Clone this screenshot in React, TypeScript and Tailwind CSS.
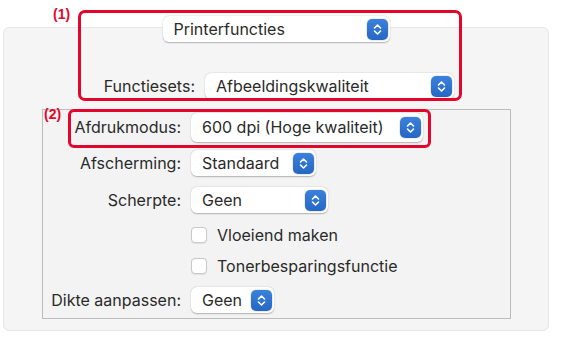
import React from 'react'

const Stepper = () => (
  <div className="flex h-[21px] w-[21px] items-center justify-center rounded-[5px] bg-gradient-to-b from-[#3b82dc] to-[#2567c4] shadow-[0_0_0_0.5px_rgba(0,0,0,0.15)]">
    <svg width="9" height="13" viewBox="0 0 9 13" fill="none">
      <path d="M1.5 5 L4.5 2 L7.5 5" stroke="white" strokeWidth="1.6" strokeLinecap="round" strokeLinejoin="round" />
      <path d="M1.5 8 L4.5 11 L7.5 8" stroke="white" strokeWidth="1.6" strokeLinecap="round" strokeLinejoin="round" />
    </svg>
  </div>
)

const Popup = ({ text, width, tall }: { text: string; width: string; tall?: boolean }) => (
  <div
    className={`flex ${tall ? 'h-[29px]' : 'h-[26px]'} ${width} items-center justify-between rounded-[6px] bg-white pl-[11px] pr-[2px] shadow-[0_0.5px_1.5px_rgba(0,0,0,0.28)]`}
  >
    <span className="whitespace-nowrap">{text}</span>
    <Stepper />
  </div>
)

const Row = ({ label, children, h }: { label: string; children: React.ReactNode; h: string }) => (
  <div className={`flex ${h} items-center`}>
    <div className="w-[148px] whitespace-nowrap pr-[10px] text-right">{label}</div>
    {children}
  </div>
)

const Check = ({ label }: { label: string }) => (
  <div className="flex h-[20px] items-center pl-[148px]">
    <div className="h-[16px] w-[16px] rounded-[4px] border border-[#c9c9c9] bg-white shadow-[0_0.5px_1px_rgba(0,0,0,0.08)]" />
    <span className="ml-[10px] whitespace-nowrap">{label}</span>
  </div>
)

export default function App() {
  return (
    <div
      className="relative h-[340px] w-[563px] overflow-hidden bg-white text-[16px] leading-none text-[#2a2a2a]"
      style={{ fontFamily: 'Inter, "Liberation Sans", sans-serif' }}
    >
      <div className="ml-[3px] mt-[27px] flex h-[304px] w-[546px] flex-col rounded-[6px] border border-[#e7e7e7] bg-[#f5f5f5]">
        <div className="-mt-[12px] flex justify-center">
          <Popup text="Printerfuncties" width="w-[227px]" />
        </div>
        <div className="mt-[31px] flex h-[26px] items-center">
          <span className="w-[191px] whitespace-nowrap text-right">Functiesets:</span>
          <div className="ml-[10px]">
            <Popup text="Afbeeldingskwaliteit" width="w-[249px]" />
          </div>
        </div>
        <div className="ml-[38px] mt-[10px] flex h-[210px] w-[469px] flex-col border border-[#bcbcbc] bg-[#f3f3f3] pt-[2px]">
          <Row label="Afdrukmodus:" h="h-[30px]">
            <Popup text="600 dpi (Hoge kwaliteit)" width="w-[232px]" tall />
          </Row>
          <div className="mt-[8px]">
            <Row label="Afscherming:" h="h-[26px]">
              <Popup text="Standaard" width="w-[125px]" />
            </Row>
          </div>
          <div className="mt-[11px]">
            <Row label="Scherpte:" h="h-[26px]">
              <Popup text="Geen" width="w-[137px]" />
            </Row>
          </div>
          <div className="mt-[12px]">
            <Check label="Vloeiend maken" />
          </div>
          <div className="mt-[11px]">
            <Check label="Tonerbesparingsfunctie" />
          </div>
          <div className="mt-[11px]">
            <Row label="Dikte aanpassen:" h="h-[26px]">
              <Popup text="Geen" width="w-[83px]" />
            </Row>
          </div>
        </div>
      </div>

      {/* annotations */}
      <div className="absolute left-[78px] top-[10px] h-[91px] w-[384px] rounded-[7px] border-[3px] border-[#e3062c]" />
      <span className="absolute left-[53px] top-[7px] text-[14px] font-bold leading-none text-[#e3062c]" style={{ fontFamily: '"Liberation Sans", sans-serif' }}>
        (1)
      </span>
      <div className="absolute left-[68px] top-[109px] h-[39px] w-[363px] rounded-[6px] border-[3px] border-[#e3062c]" />
      <span className="absolute left-[44px] top-[107px] text-[14px] font-bold leading-none text-[#e3062c]" style={{ fontFamily: '"Liberation Sans", sans-serif' }}>
        (2)
      </span>
    </div>
  )
}
